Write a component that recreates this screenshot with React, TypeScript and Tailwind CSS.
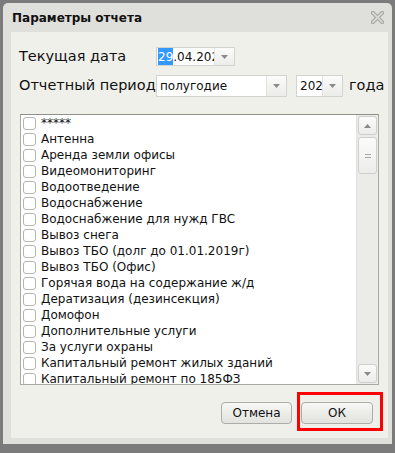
import React from "react";

const items = [
  "*****",
  "Антенна",
  "Аренда земли офисы",
  "Видеомониторинг",
  "Водоотведение",
  "Водоснабжение",
  "Водоснабжение для нужд ГВС",
  "Вывоз снега",
  "Вывоз ТБО (долг до 01.01.2019г)",
  "Вывоз ТБО (Офис)",
  "Горячая вода на содержание ж/д",
  "Дератизация (дезинсекция)",
  "Домофон",
  "Дополнительные услуги",
  "За услуги охраны",
  "Капитальный ремонт жилых зданий",
  "Капитальный ремонт по 185ФЗ",
];

const Arrow = ({ up = false }: { up?: boolean }) => (
  <svg width="7" height="4" viewBox="0 0 7 4">
    <path d={up ? "M0 4 L3.5 0 L7 4 Z" : "M0 0 L7 0 L3.5 4 Z"} fill="#8a8a8a" />
  </svg>
);

const DropButton = () => (
  <div className="flex h-full w-[20px] shrink-0 items-center justify-center border-l border-[#e2e2de] bg-gradient-to-b from-[#fbfbf9] to-[#ececea]">
    <Arrow />
  </div>
);

const CloseIcon = () => (
  <svg width="13" height="13" viewBox="0 0 14 14">
    <path d="M2 2 L12 12 M12 2 L2 12" stroke="#a9a9a6" strokeWidth="4.5" strokeLinecap="round" />
    <path d="M2 2 L12 12 M12 2 L2 12" stroke="#d6d6d2" strokeWidth="2" strokeLinecap="round" />
  </svg>
);

export default function App() {
  return (
    <div className="w-[395px] h-[453px] overflow-hidden bg-[#7b7b7b] pl-[3px] pt-[3px]" style={{ fontFamily: "'DejaVu Sans', Verdana, sans-serif" }}>
      <div className="flex h-[441px] w-[389px] flex-col rounded-t-[5px] bg-[#dfdfdb] pl-[8px] pr-[4px]">
        <div className="flex h-[29px] shrink-0 items-center justify-between pl-[1px] pr-[4px]">
          <span className="text-[12px] font-bold text-[#111]">Параметры отчета</span>
          <CloseIcon />
        </div>

        <div className="flex h-[406px] w-[377px] flex-col bg-[#f0f0eb] pl-[8px] pt-[15px]">
          <div className="flex h-[19px] items-center">
            <span className="w-[137px] shrink-0 text-[14.5px] text-[#111]">Текущая дата</span>
            <div className="flex h-[19px] w-[79px] items-stretch border border-[#d3d3cf] bg-white">
              <div className="flex flex-1 items-center overflow-hidden whitespace-nowrap pl-[1px] text-[12px] text-[#111]">
                <span className="bg-[#3399ff] text-white">29</span>
                <span>.04.202</span>
              </div>
              <DropButton />
            </div>
          </div>

          <div className="mt-[9px] flex h-[22px] items-center">
            <span className="w-[137px] shrink-0 overflow-hidden whitespace-nowrap text-[14.5px] text-[#111]">Отчетный период</span>
            <div className="flex h-[22px] w-[131px] items-stretch border border-[#d3d3cf] bg-white">
              <div className="flex flex-1 items-center pl-[3px] text-[12px] text-[#111]">полугодие</div>
              <DropButton />
            </div>
            <div className="ml-[9px] flex h-[22px] w-[47px] items-stretch border border-[#d3d3cf] bg-white">
              <div className="flex flex-1 items-center overflow-hidden pl-[3px] text-[12px] text-[#111]">202</div>
              <DropButton />
            </div>
            <span className="ml-[6px] text-[14.5px] text-[#111]">года</span>
          </div>

          <div className="ml-[1px] mt-[17px] flex h-[271px] w-[359px] shrink-0 border border-[#a9a9a5] border-t-[#8f8f8b] bg-white">
            <div className="flex-1 overflow-hidden">
              {items.map((t) => (
                <div key={t} className="flex h-[16px] items-center whitespace-nowrap">
                  <div className="ml-[2px] h-[13px] w-[13px] shrink-0 rounded-[3px] border border-[#b5b5b1] bg-white" />
                  <span className="ml-[5px] text-[12px] leading-none text-[#111]">{t}</span>
                </div>
              ))}
            </div>
            <div className="flex w-[22px] shrink-0 flex-col border-l border-[#e0e0dc] bg-[#ebebe7] px-[1px] py-[1px]">
              <div className="flex h-[19px] items-center justify-center rounded-[3px] border border-[#cfcfcb] bg-gradient-to-b from-[#fbfbf9] to-[#ececea]">
                <Arrow up />
              </div>
              <div className="mt-[2px] flex h-[37px] items-center justify-center rounded-[3px] border border-[#cfcfcb] bg-gradient-to-b from-[#fbfbf9] to-[#ececea]">
                <svg width="6" height="4" viewBox="0 0 6 4">
                  <path d="M0 0.5 H6 M0 3.5 H6" stroke="#a5a5a2" strokeWidth="1" />
                </svg>
              </div>
              <div className="flex-1" />
              <div className="flex h-[19px] items-center justify-center rounded-[3px] border border-[#cfcfcb] bg-gradient-to-b from-[#fbfbf9] to-[#ececea]">
                <Arrow />
              </div>
            </div>
          </div>

          <div className="mt-[17px] flex pl-[202px]">
            <button className="flex h-[22px] w-[71px] items-center justify-center rounded-[4px] border border-[#acaca8] bg-gradient-to-b from-[#f7f7f5] to-[#e2e2de] text-[12px] text-[#111]">
              Отмена
            </button>
            <div className="relative ml-[9px]">
              <button className="flex h-[22px] w-[72px] items-center justify-center rounded-[4px] border border-[#acaca8] bg-gradient-to-b from-[#f7f7f5] to-[#e2e2de] text-[12px] text-[#111]">
                ОК
              </button>
              <div className="absolute -left-[4px] -top-[10px] h-[39px] w-[86px] border-[3px] border-[#ff0000]" />
            </div>
          </div>
        </div>
      </div>
    </div>
  );
}
